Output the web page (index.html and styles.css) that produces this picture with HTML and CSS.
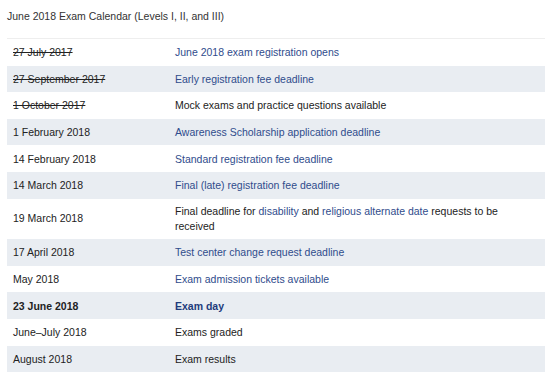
FILE: index.html
```html
<!DOCTYPE html>
<html>
<head>
<meta charset="utf-8">
<link rel="stylesheet" href="styles.css">
</head>
<body>
<div class="page">
  <h2 class="title">June 2018 Exam Calendar (Levels I, II, and III)</h2>
  <table class="cal">
    <tbody>
      <tr><td class="date"><s>27 July 2017</s></td><td><a href="#">June 2018 exam registration opens</a></td></tr>
      <tr><td class="date"><s>27 September 2017</s></td><td><a href="#">Early registration fee deadline</a></td></tr>
      <tr><td class="date"><s>1 October 2017</s></td><td>Mock exams and practice questions available</td></tr>
      <tr><td class="date">1 February 2018</td><td><a href="#">Awareness Scholarship application deadline</a></td></tr>
      <tr><td class="date">14 February 2018</td><td><a href="#">Standard registration fee deadline</a></td></tr>
      <tr><td class="date">14 March 2018</td><td><a href="#">Final (late) registration fee deadline</a></td></tr>
      <tr class="tall"><td class="date">19 March 2018</td><td class="wrap"><span>Final deadline for </span><a href="#">disability</a><span> and </span><a href="#">religious alternate date</a><span> requests to be</span><br><span>received</span></td></tr>
      <tr><td class="date">17 April 2018</td><td><a href="#">Test center change request deadline</a></td></tr>
      <tr><td class="date">May 2018</td><td><a href="#">Exam admission tickets available</a></td></tr>
      <tr class="strong"><td class="date">23 June 2018</td><td><a href="#">Exam day</a></td></tr>
      <tr><td class="date">June–July 2018</td><td>Exams graded</td></tr>
      <tr><td class="date">August 2018</td><td>Exam results</td></tr>
    </tbody>
  </table>
</div>
</body>
</html>
```

FILE: styles.css
```css
html, body {
  margin: 0;
  padding: 0;
  background: #ffffff;
}
body {
  font-family: "Liberation Sans", Arial, sans-serif;
  font-size: 10.5px;
  color: #222222;
}
.page {
  padding: 10px 5px 0 7px;
}
.title {
  margin: 0 0 15px 0;
  font-size: 10.5px;
  font-weight: normal;
  color: #333333;
  line-height: 13px;
}
.cal {
  width: 100%;
  border-collapse: collapse;
  border-top: 1px solid #eeeeee;
}
.cal td {
  padding: 6.3px 6px;
  line-height: 14px;
  vertical-align: middle;
}
.cal td.date {
  width: 150px;
}
.cal tr.tall td {
  padding-top: 5.3px;
  padding-bottom: 5.3px;
  line-height: 15px;
}
.cal tr:nth-child(even) td {
  background: #e9edf2;
}
.cal a {
  color: #2f4c8c;
  text-decoration: none;
}
.cal tr.strong td {
  font-weight: bold;
}
.cal tr.strong a {
  color: #1e3c7c;
}
```
